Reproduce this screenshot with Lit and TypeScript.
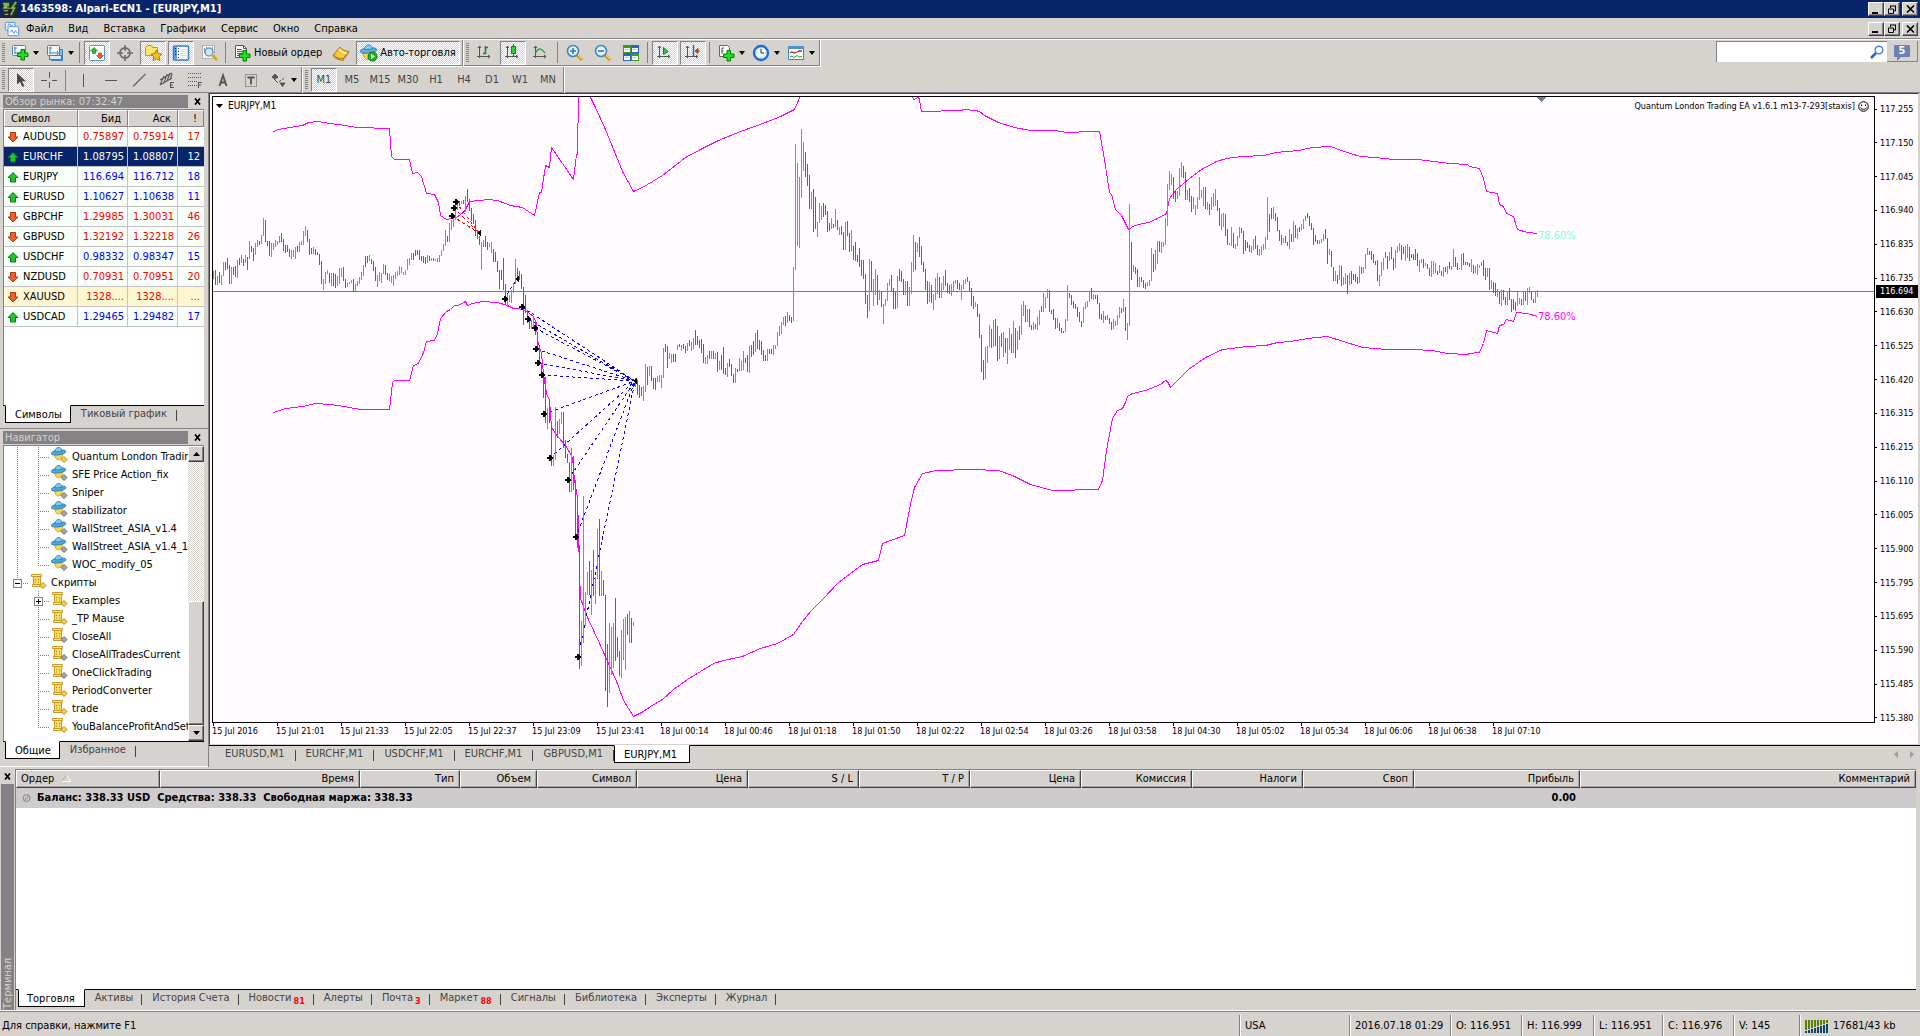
import { LitElement, html, svg, css, nothing } from "lit";
import { customElement, state } from "lit/decorators.js";
import { classMap } from "lit/directives/class-map.js";

/* ---------- shared look ---------- */

const base = css`
  :host {
    --face: #d6d3ce;
    --shade: #848284;
    --navy: #08246b;
    --paper: #fffbff;
    --dither: conic-gradient(#fff 25%, #d6d3ce 0 50%, #fff 0 75%, #d6d3ce 0) 0 0 / 2px 2px;
    font-family: "DejaVu Sans Condensed", "Noto Sans", sans-serif;
    font-size: 11px;
    line-height: 14px;
    color: #000;
    box-sizing: border-box;
  }
  *, *::before, *::after { box-sizing: border-box; }
  button {
    font: inherit;
    color: inherit;
    background: none;
    border: 0;
    padding: 0;
    margin: 0;
    border-radius: 0;
    white-space: nowrap;
  }
  svg { display: block; flex: none; }
  .caption {
    display: flex;
    gap: 4px;
    height: 14px;
    margin: 2px 4px 0 3px;
    align-items: flex-start;
  }
  .caption h2 {
    flex: 1;
    margin: 0;
    padding-left: 2px;
    background: var(--shade);
    color: var(--face);
    font-size: 11px;
    font-weight: normal;
    line-height: 13px;
    height: 13px;
  }
  .caption button { width: 12px; height: 13px; display: grid; place-items: center; }
  .tabs { display: flex; border-top: 1px solid #000; height: 18px; padding-left: 2px; color: #444; }
  .tabs button { padding: 0 10px; height: 16px; line-height: 16px; position: relative; }
  .tabs button::after { content: ""; position: absolute; right: 0; top: 4px; height: 11px; width: 1px; background: #444; }
  .tabs button.on {
    background: #fff;
    color: #000;
    height: 18px;
    margin-top: -1px;
    padding: 0 8px 0 9px;
    line-height: 18px;
    border: 1px solid #000;
    border-top-color: #fff;
    border-right-width: 1px;
  }
  .tabs button.on::after { content: none; }
`;

const closeGlyph = svg`<svg width="8" height="7" viewBox="0 0 8 7"><path d="M1 .5l5 6M6 .5L1 6.500" stroke="#000" stroke-width="1.800"/></svg>`;

/* ---------- icons ---------- */

const plus = (x: number, y: number) => svg`
  <path transform="translate(${x} ${y})" d="M4 .5h3.500v3.500h3.500v3.500h-3.500v3.500h-3.500v-3.500h-3.500v-3.500h3.500z" fill="#1fe01f" stroke="#067a06"/>`;
const axes = svg`<path d="M3.500 2v12M1 12.500h13M2 4l1.500-2L5 4M12 11l2 1.500-2 1.500" fill="none" stroke="#555"/>`;

const icons: Record<string, unknown> = {
  app: svg`<rect width="18" height="18" fill="#202830"/><path d="M1 3h6v2H3v2h3M16 1l-5 7h3l-4 8" fill="none" stroke="#7ab648" stroke-width="2"/><path d="M1 8h8M2 11h5M3 15h4" stroke="#cfd8a0"/>`,
  doc: svg`<rect x="1.500" y="1.500" width="11" height="9" rx="1" fill="#e8f3ff" stroke="#3c8ae6"/><rect x="4.500" y="6.500" width="12" height="10" rx="1" fill="#fff" stroke="#3c8ae6"/><path d="M4 6l2-3 2 3 2-2M7 13l2-3 2 4 2-3 2 3" fill="none" stroke="#3c8ae6"/>`,
  newChart: svg`<rect x="1.500" y="1.500" width="13" height="10" rx="1" fill="#f2f8fc" stroke="#4a87b5"/><path d="M4 3v7M3 9h10M3 4h3" stroke="#4a87b5"/>${plus(6, 5)}`,
  profiles: svg`<path d="M5.500 5.500h11v11h-11z" fill="#8bbbe0" stroke="#3f7fb3"/><rect x="1.500" y="1.500" width="12" height="10" rx="1" fill="#f2f8fc" stroke="#3f7fb3"/><rect x="3.500" y="11.500" width="12" height="4" fill="#dcebf7" stroke="#3f7fb3"/><path d="M4 3v7M3 9h9M3 4h3M11 7l1.500 2L11 11" fill="none" stroke="#3f7fb3"/>`,
  market: svg`<rect x="1.500" y="1.500" width="15" height="15" rx="1" fill="#fff" stroke="#5797d0"/><path d="M6 3.500l3.500 3.500H7.500v2.500h-3V7H2.500z" fill="#2eb82e" stroke="#12781a" stroke-width=".6"/><path d="M12 15l3.500-3.500H13.500V9h-3v2.500H8.500z" fill="#f05a28" stroke="#a8300c" stroke-width=".6"/>`,
  target: svg`<circle cx="9" cy="9" r="5" fill="none" stroke="#6b6b6b" stroke-width="1.800"/><path d="M9 1v6M9 11v6M1 9h6M11 9h6" stroke="#6b6b6b" stroke-width="1.500"/>`,
  favorites: svg`<path d="M1.500 3.500l2-2h4l1 2h5v8h-12z" fill="#ffe36b" stroke="#c9961c"/><path d="M12.500 6l1.700 3.600 3.800.5-2.800 2.700.7 3.900-3.400-1.900-3.400 1.900.7-3.900L7 10.100l3.800-.5z" fill="#f5c21c" stroke="#8f6410" stroke-width=".8"/>`,
  navigator: svg`<rect x="1.500" y="2" width="15" height="14" rx="1" fill="#fff" stroke="#2f7fd0" stroke-width="1.500"/><rect x="2" y="3" width="3" height="12" fill="#5a9be6"/><path d="M3.500 4v1M3.500 7v1M3.500 10v1M6.500 4v1M6.500 7v1M6.500 10v1M6.500 13v1" stroke="#123"/><path d="M8 5.500h7M8 7.500h7M8 9.500h7M8 11.500h7" stroke="#d9dfe8"/>`,
  tester: svg`<path d="M2.500 1.500h12v13h-12z" fill="#fafafa" stroke="#999" stroke-dasharray="2 1"/><path d="M4.500 9V4M6.500 6V3M12.500 6V3" stroke="#7f96ac"/><circle cx="9" cy="8" r="4" fill="#cfe6fa" stroke="#6d9cc9" stroke-width="1.500"/><path d="M12 11l5 5" stroke="#d8a520" stroke-width="2.500"/>`,
  order: svg`<path d="M1.500 1.500h8l3 3v9h-11z" fill="#fff" stroke="#555"/><path d="M9.500 1.500v3h3M3 5.500h5M3 7.500h7M3 9.500h7M3 11.500h3" fill="none" stroke="#555"/>${plus(5, 6)}`,
  book: svg`<path d="M1.500 11L8 3c2 3 5 4 9 4.500L11 15c-4 0-7-1-9.500-4z" fill="#f7c43c" stroke="#a87408"/><path d="M1.500 11v1.500c2 2.500 6 3.500 9.500 4V15c-4 0-7-1-9.500-4z" fill="#fff2bf" stroke="#a87408"/><path d="M11 16.500l6-7.500V7.500L11 15z" fill="#b87c0c"/><path d="M7 5c2 3 5 4 8 4.500" fill="none" stroke="#fff0a8" stroke-width="1.500"/>`,
  auto: svg`<path d="M2 8h13l-3 6c-2 2-5 2-7 0z" fill="#ffd84d" stroke="#c69518"/><ellipse cx="8.500" cy="6.500" rx="8" ry="2.600" fill="#5fb0e0" stroke="#2e7fb8" transform="rotate(-6 8.500 6.500)"/><path d="M4.500 5.500c0-6 8-6 8-.5z" fill="#8fd0f0" stroke="#2e7fb8"/><circle cx="12.500" cy="12.500" r="4.500" fill="#21b321" stroke="#0a780a"/><path d="M11 10l4 2.500-4 2.500z" fill="#fff"/>`,
  bars: svg`${axes}<path d="M9.500 2v8M9.500 3.500h2.500M7 9.500h2.500" stroke="#0b8a1e" stroke-width="1.500"/>`,
  candles: svg`${axes}<path d="M9.500 0v12" stroke="#0b8a1e"/><rect x="7.500" y="2.500" width="4" height="7" fill="#26d03e" stroke="#0b8a1e"/>`,
  line: svg`${axes}<path d="M3 10c3-6 5-7 10 -1" fill="none" stroke="#2e9c3c" stroke-width="1.300"/>`,
  zoomIn: svg`<path d="M10 10l6 6" stroke="#c99a1a" stroke-width="3"/><path d="M11 10l5 5" stroke="#ffe58a"/><circle cx="7" cy="7" r="5.500" fill="#e4f3fd" stroke="#3f87c4" stroke-width="1.600"/><path d="M4 7h6M7 4v6" stroke="#3477b5" stroke-width="1.600"/>`,
  zoomOut: svg`<path d="M10 10l6 6" stroke="#c99a1a" stroke-width="3"/><path d="M11 10l5 5" stroke="#ffe58a"/><circle cx="7" cy="7" r="5.500" fill="#e4f3fd" stroke="#3f87c4" stroke-width="1.600"/><path d="M4 7h6" stroke="#3477b5" stroke-width="1.600"/>`,
  tile: svg`<rect x="1" y="1" width="8" height="8" fill="#3f9b1c"/><rect x="9" y="1" width="8" height="8" fill="#2a62c9"/><rect x="1" y="9" width="8" height="8" fill="#2a62c9"/><rect x="9" y="9" width="8" height="8" fill="#3f9b1c"/><path d="M2 4h6v4H2zM10 4h6v4h-6zM2 12h6v4H2zM10 12h6v4h-6z" fill="#f4f8ff"/><path d="M3 5.500h3M11 5.500h3M3 13.500h3M11 13.500h3" stroke="#9fb8d0"/>`,
  scroll: svg`${axes}<path d="M7.500 3.500l4.500 4-4.500 3z" fill="#2fc44a" stroke="#0b8a1e"/>`,
  shift: svg`${axes}<path d="M9.500 1v11" stroke="#1a6fb0" stroke-width="1.500"/><path d="M16 7h-4M14 4.500L11 7l3 2.500z" stroke="#c23a10" fill="#c23a10"/>`,
  indicators: svg`<path d="M2.500 1.500h8l2 2v9h-10z" fill="#fff" stroke="#666"/><path d="M5 10V4h2M4.500 7h2" fill="none" stroke="#555"/>${plus(6, 6)}`,
  periods: svg`<circle cx="9" cy="9" r="7" fill="#eef6ff" stroke="#1f6fd0" stroke-width="2.400"/><path d="M9 5v4h3" fill="none" stroke="#333"/><path d="M9 3.500v1M9 13.500v1M3.500 9h1M13.500 9h1" stroke="#888"/>`,
  templates: svg`<rect x="1.500" y="2.500" width="15" height="13" fill="#fff" stroke="#3f83c6"/><path d="M1 2h16v3H1z" fill="#4a90d9"/><path d="M3 9l2-1 2 1 3-1 2-1h3" fill="none" stroke="#a33014" stroke-width="1.300"/><path d="M3 13l2-1 2 1.500 3-2 2 1.500 3-.5" fill="none" stroke="#2c9a3a"/>`,
  cursor: svg`<path d="M5 2v11.500l3-2.500 2.500 5 2-1-2.500-4.800h4z" fill="#4a4a4a"/>`,
  cross: svg`<path d="M9.500 1v6M9.500 11v6M1 9.500h6M12 9.500h5" stroke="#555"/>`,
  vline: svg`<path d="M9.500 3v13" stroke="#555"/>`,
  hline: svg`<path d="M3 9.500h12" stroke="#555"/>`,
  trend: svg`<path d="M3 15.500L15.500 3" stroke="#666" stroke-width="1.300"/>`,
  channel: svg`<path d="M2 9L14 2M2 14L14 7M2 14l4-9M6 12l3-9M9 10l3-8M12 9l2-6" stroke="#555" stroke-width="1.100"/><path d="M12 11.500h4M12 14h3M12 16.500h4M12.500 11v6" stroke="#555"/>`,
  fibo: svg`<path d="M2 2.500h14M2 6.500h14M2 10.500h9M2 14.500h9" stroke="#555" stroke-dasharray="1 1"/><path d="M12.500 11v6M12 11.500h4M12 14h3" stroke="#555"/>`,
  textA: svg`<path d="M5.500 15L9 4.500 12.500 15M7 11.500h4" fill="none" stroke="#555" stroke-width="1.900"/>`,
  label: svg`<rect x="3.500" y="3.500" width="11" height="12" fill="none" stroke="#555" stroke-dasharray="1 1"/><path d="M5.500 6.500h7M9 6.500v7" stroke="#555" stroke-width="1.800"/>`,
  arrows: svg`<path d="M6 3l3 3-3 2-3-2zM5 8l4 4M11 12h5l-2.500 3.500zM10 11l2-2M13 8.500l2-1" fill="#555" stroke="#555"/>`,
  expert: svg`<path d="M3 7h9l-1.500 4c-1.500 2.500-4.500 2.500-6 0z" fill="#f8d848" stroke="#c49a20" stroke-width=".8"/><ellipse cx="7.500" cy="5.500" rx="7.500" ry="2.400" fill="#4fa8e0" stroke="#2878b0" stroke-width=".8" transform="rotate(-8 7.500 5.500)"/><path d="M4 5c0-6 7-6 7-.5z" fill="#80c8f0" stroke="#2878b0" stroke-width=".8"/>`,
  script: svg`<path d="M3.500 3.500h7v8h-7z" fill="#fbdc66" stroke="#c99a28"/><path d="M1.500 1.500h10v2h-10zM2.500 11.500h9v2h-9z" fill="#ffe98a" stroke="#c99a28"/><path d="M5 6.500h1M8 6.500h1M5 9h1M8 9h1" stroke="#a87c18"/>`,
};

const icon = (name: string, size = 18) =>
  svg`<svg width=${size} height=${size} viewBox="0 0 18 18" aria-hidden="true">${icons[name]}</svg>`;

const drop = svg`<svg width="6" height="4" viewBox="0 0 6 4" aria-hidden="true"><path d="M0 0h6L3 4z" fill="#000"/></svg>`;

/* ---------- market watch ---------- */

const quotes: [string, string, string, string, "up" | "down"][] = [
  ["AUDUSD", "0.75897", "0.75914", "17", "down"],
  ["EURCHF", "1.08795", "1.08807", "12", "up"],
  ["EURJPY", "116.694", "116.712", "18", "up"],
  ["EURUSD", "1.10627", "1.10638", "11", "up"],
  ["GBPCHF", "1.29985", "1.30031", "46", "down"],
  ["GBPUSD", "1.32192", "1.32218", "26", "down"],
  ["USDCHF", "0.98332", "0.98347", "15", "up"],
  ["NZDUSD", "0.70931", "0.70951", "20", "down"],
  ["XAUUSD", "1328....", "1328....", "...", "down"],
  ["USDCAD", "1.29465", "1.29482", "17", "up"],
];

@customElement("market-watch")
class MarketWatch extends LitElement {
  @state() private selected = "EURCHF";

  static styles = [base, css`
    :host { display: flex; flex-direction: column; border-bottom: 1px solid var(--shade); padding-bottom: 5px; }
    .list { background: #fff; height: 296px; margin: 0 4px 0 3px; border-left: 1px solid var(--shade); border-top: 1px solid var(--shade); }
    table { border-collapse: separate; border-spacing: 0; width: 100%; table-layout: fixed; }
    th {
      height: 17px; padding: 0 6px; font-weight: normal; text-align: right; background: var(--face);
      border: 1px solid var(--shade); border-top-color: #fff; border-left-color: #fff;
    }
    th:first-child { text-align: left; width: 74px; }
    th:nth-child(2), th:nth-child(3) { width: 50px; }
    td {
      height: 20px; padding: 0 3px 0 0; text-align: right; background: #f8fff8; color: #f00; line-height: 18px;
      border-right: 1px solid #c6c3c6; border-bottom: 1px solid #c6c3c6;
    }
    td:last-child { padding-right: 4px; border-right: 0; }
    .sym { display: flex; align-items: center; gap: 4px; padding-left: 3px; color: #000; }
    .up td { color: #00f; }
    .up .sym { color: #000; }
    .gold td { background: #fff7d2; }
    .sel td, .sel .sym { background: var(--navy); color: #fff; }
    .tabs { margin: 0 4px 0 3px; }
  `];

  render() {
    return html`
      <header class="caption"><h2>Обзор рынка: 07:32:47</h2><button aria-label="Закрыть">${closeGlyph}</button></header>
      <div class="list">
        <table>
          <thead><tr><th>Символ</th><th>Бид</th><th>Аск</th><th>!</th></tr></thead>
          <tbody>
            ${quotes.map(([s, bid, ask, spread, dir]) => html`
              <tr class=${classMap({ up: dir === "up", gold: s === "XAUUSD", sel: s === this.selected })} @click=${() => (this.selected = s)}>
                <td><span class="sym">
                  <svg width="12" height="12" viewBox="0 0 12 12" aria-hidden="true">
                    ${dir === "up"
                      ? svg`<path d="M6 1l5 5H8.500v4.500h-5V6H1z" transform="translate(0 .5)" fill="#25c02f" stroke="#0f7a1c"/>`
                      : svg`<path d="M6 11l5-5H8.500V1.500h-5V6H1z" fill="#f0602c" stroke="#a8380f"/>`}
                  </svg>${s}</span></td>
                <td>${bid}</td><td>${ask}</td><td>${spread}</td>
              </tr>`)}
          </tbody>
        </table>
      </div>
      <nav class="tabs"><button class="on">Символы</button><button>Тиковый график</button></nav>
    `;
  }
}

/* ---------- navigator ---------- */

type Node = { text: string; kind: "expert" | "script"; on?: boolean; depth: 1 | 2; box?: "+" | "-"; last?: boolean };
const nodes: Node[] = [
  { text: "Quantum London Tradin", kind: "expert", on: true, depth: 2 },
  { text: "SFE Price Action_fix", kind: "expert", depth: 2 },
  { text: "Sniper", kind: "expert", depth: 2 },
  { text: "stabilizator", kind: "expert", depth: 2 },
  { text: "WallStreet_ASIA_v1.4", kind: "expert", depth: 2 },
  { text: "WallStreet_ASIA_v1.4_1", kind: "expert", depth: 2 },
  { text: "WOC_modify_05", kind: "expert", depth: 2, last: true },
  { text: "Скрипты", kind: "script", on: true, depth: 1, box: "-" },
  { text: "Examples", kind: "script", on: true, depth: 2, box: "+" },
  { text: "_TP Mause", kind: "script", on: true, depth: 2 },
  { text: "CloseAll", kind: "script", depth: 2 },
  { text: "CloseAllTradesCurrent", kind: "script", depth: 2 },
  { text: "OneClickTrading", kind: "script", depth: 2 },
  { text: "PeriodConverter", kind: "script", on: true, depth: 2 },
  { text: "trade", kind: "script", on: true, depth: 2 },
  { text: "YouBalanceProfitAndSet", kind: "script", on: true, depth: 2, last: true },
];

@customElement("navigator-panel")
class NavigatorPanel extends LitElement {
  static styles = [base, css`
    :host { display: flex; flex-direction: column; flex: 1; min-height: 0; padding-bottom: 7px; border-bottom: 1px solid #fff; }
    .body { flex: 1; min-height: 0; display: flex; background: #fff; margin: 0 4px 0 3px; border-left: 1px solid var(--shade); border-top: 1px solid var(--shade); }
    ul { flex: 1; min-width: 0; margin: 0; padding: 1px 0 0; list-style: none; overflow: hidden; }
    li { display: flex; align-items: center; height: 18px; white-space: nowrap; }
    li span { padding: 2px 0 0 4px; }
    .bar { width: 16px; display: flex; flex-direction: column; background: var(--dither); }
    .bar button, .thumb { background: var(--face); border: 1px solid #fff; border-right-color: #424142; border-bottom-color: #424142; box-shadow: inset -1px -1px var(--shade); }
    .bar button { height: 16px; display: grid; place-items: center; flex: none; }
    .track { flex: 1; display: flex; flex-direction: column; justify-content: flex-end; }
    .thumb { height: 47%; }
    .tabs { margin: 0 4px 0 3px; }
  `];

  private gutter(n: Node, i: number) {
    const w = n.depth === 1 ? 26 : 47;
    const x = n.depth === 1 ? 13 : 34;
    const end = n.depth === 1 || n.last ? 10 : 18;
    return svg`<svg width=${w} height="18" aria-hidden="true">
      <g stroke="#848284" stroke-dasharray="1 1" shape-rendering="crispEdges">
        ${i < 7 ? svg`<path d="M13.500 0v18"/>` : nothing}
        <path d="M${x}.5 0V${end}M${x} 10.500H${w - 1}"/>
      </g>
      ${n.box ? svg`<rect x=${x - 4 + 0.5} y="6.500" width="8" height="8" fill="#fff" stroke="#848284"/>
        <path d="M${x - 2} 10.500h5${n.box === "+" ? `M${x}.5 8v5` : ""}" stroke="#000"/>` : nothing}
    </svg>`;
  }

  render() {
    return html`
      <header class="caption"><h2>Навигатор</h2><button aria-label="Закрыть">${closeGlyph}</button></header>
      <div class="body">
        <ul>
          ${nodes.map((n, i) => html`<li>${this.gutter(n, i)}
            <svg width="17" height="18" viewBox="0 0 17 18" aria-hidden="true">
              ${icons[n.kind]}
              <path d="M13 9.500l3 3-3 3-3-3z" fill=${n.on ? "#f7cf4a" : "#a5a5a5"} stroke=${n.on ? "#b98a18" : "#6e6e6e"}/>
            </svg><span>${n.text}</span></li>`)}
        </ul>
        <div class="bar">
          <button aria-label="Вверх"><svg width="7" height="4"><path d="M0 4h7L3.500 0z"/></svg></button>
          <div class="track"><div class="thumb"></div></div>
          <button aria-label="Вниз"><svg width="7" height="4"><path d="M0 0h7L3.500 4z"/></svg></button>
        </div>
      </div>
      <nav class="tabs"><button class="on">Общие</button><button>Избранное</button></nav>
    `;
  }
}

/* ---------- chart ---------- */

/* Bars are two pixels apart. Each entry is direction + high,low in thirds of a pixel, measured from the run's top. */
const runs: { first: number; top: number; bars: string }[] = [
  { first: 0, top: -7, bars: `g543,566 b540,584 g558,584 b546,578 g555,584 g516,558 b516,540 b504,536 b525,581 g531,581 b531,556 b528,561 g510,564 b504,524 g495,518 b507,528 g495,518 b501,540 g453,507 b468,486 b474,513 g459,495 g450,470 b453,465 g435,462 g384,438 b390,456 b453,468 b453,498 g459,501 g459,480 g450,471 g453,465 g438,459 b429,456 b447,483 b465,489 b465,486 b477,501 g480,507 g480,500 g471,507 b468,486 g456,486 g453,465 g423,465 g408,438 b420,456 b447,495 b474,492 g471,492 b477,495 b486,495 b492,525 b513,582 g567,600 g546,582 g540,552 b550,580
    g550,588 b550,588 b551,595 g558,588 g534,582 g534,560 b530,572 b567,594 g579,591 g575,583 g570,578 b567,605 g582,603 g573,588 g561,582 g546,570 g525,558 b498,531 b498,519 g495,513 b507,522 b513,543 b531,573 g555,590 g546,573 g549,579 g522,552 b525,555 b549,570 g552,572 g558,578 g555,587 g546,567 g543,558 g528,555 g531,549 g546,555 g540,555 g507,540 g504,525 g489,511 b489,510 b480,498 b480,495 b480,510 b498,513 b498,519 b501,522 g495,519 b498,513 g504,513 b504,513 g507,514 g505,516 g495,516 g480,498 g462,483 g420,468 b438,456 g399,456 g390,420 g375,412 g340,390 g334,360 b333,348 g333,342 b330,342 g318,366 b297,336 b327,362 b354,393 b372,402 b390,438 b420,447 b438,465 g456,540 g450,470 b438,472 b456,480 g459,470 g456,490 b478,515 b486,517 b513,546 b540,597 b540,570 b504,600 b582,645 g612,651 g615,636 g600,640 g579,608 g507,582 b534,565 b543,570 b552,597 b591,705 b615,670 b660,700 b680,717 g690,717 g682,712 b697,735 b732,777 b777,822 b820,858 b855,924 b860,1000` },
  { first: 167, top: 193, bars: `g354,417 b330,398 b398,528 g495,528 g351,510 b393,444 g387,432 g366,402 b366,474 b450,503 b492,518 b516,606 g474,606 b498,600 b570,745 b650,773 b766,1137 g993,1128 g618,1059 g906,1007 g846,914 b813,914 g840,974 b780,918 g861,942 g717,868 b687,918 g843,918 b870,918 b915,1203 b1062,1250 g999,1208 g1011,1155 g999,1134 b924,1113 b1041,1102 b1083,1158 g1020,1163 g987,1110 g981,1140 b972,1035 g963,1059 b984,1059 g996,1008 g264,290 b270,315 b285,323 b290,318 g288,333 g222,306 b231,284 g228,258 b228,273 b264,297 b264,300 g258,276 g255,276 g255,294 g174,264 b162,186 b168,234 g189,206 g192,219 b192,216 b192,216 g165,180 b162,171 g165,183 b162,176 b168,188 g159,183 b150,168 g156,182 g144,177 b120,165 b138,165 b150,174 b147,189 b162,219 g201,222 g195,221 b183,207 g183,207 b183,207 g189,208 b186,245 g213,240 b195,240 b171,252 b234,255 g219,261 b207,231 b222,258 b252,279 g234,278 b237,246 g204,243 g213,243 g183,240 b204,219 b195,246 g168,248 b165,201 b153,195 g129,186 b120,177 b150,180 b153,195 b180,212 b195,212 g177,212 b177,192 b177,193 g165,195 g165,178 g126,168 g108,138 g96,132 g81,104 b78,108 g66,98 b75,93 b81,98 g-69,93` },
  { first: 291, top: -7, bars: `g162,540 g219,468 g261,474 g117,324 g156,243 b186,262 b222,288 b255,357 g306,357 b297,426 b321,417 g396,441 g339,399 g348,390 b339,381 b345,375 b363,426 b399,423 g384,417 b402,414 g357,411 b390,420 g411,435 b408,435 b426,480 g396,480 b393,438 b429,486 g420,483 b468,510 b456,513 b495,516 b474,531 b510,558 b510,567 b552,642 b615,684 g507,663 b513,606 g567,648 g537,615 b555,645 g600,630 b606,651 g642,702 g627,648 g579,633 g567,588 b555,603 b594,657 b606,657 g558,654 b537,573 b543,576 b567,615 g573,615 b573,648 g591,648 g516,612 g435,546 b456,540 g459,486 b441,501 b468,525 b516,546 b537,600 b573,642 g576,636 b585,639 g612,660 g564,630 g549,612 b561,624 g579,624 g558,600 b540,588 b579,609 b585,612 g582,618 g573,606 g570,582 b570,597 b579,600 g585,630 g570,597 g567,582 b561,576 b573,603 b594,648 b618,657 g636,651 b642,681 b672,744 b735,846 b810,870 g771,867 g768,819 g705,771 b717,774 g690,771 b687,768 b708,813 g738,807 b729,771 g726,801 b744,789 g744,822 g714,780 b732,789 g693,789 b714,804 g723,780 b708,750 g645,735 g633,678 b645,696 g657,696 b657,711 b705,720 g696,720 b702,717 g681,720 g660,705 b648,666 g609,666 g621,654 g597,624 b600,666 b660,672 b657,690 b684,717 g684,714 b699,723 b714,729 b723,729 g687,726 g585,693 b609,624 b615,645 b633,654 b642,657 b651,681 b666,696 b693,711 g651,699 g636,657 g633,651 g606,636 b594,627 g612,630 b615,627 b615,642 b639,687 b672,690 g663,699 b678,690 g675,690 b684,702 b696,720 g687,717 g693,708 g675,705 g651,684 b654,669 g627,666 b651,723 g699,750 g342,708` },
  { first: 459, top: 53, bars: `b276,390 g345,366 b351,372 b357,411 g381,411 b381,396 b390,414 b399,417 g396,408 g390,408 g294,393 b312,366 g300,360 g273,342 b273,306 g276,308 g276,291 g204,285 g102,228 g63,120 g72,105 b81,147 b120,156 g123,147 g54,138 g36,81 b48,84 b66,150 g120,150 b114,156 b138,186 g141,177 g165,195 g141,177 g81,150 g120,144 g111,168 b111,177 g156,180 b162,195 g141,180 g129,171 g117,168 b150,183 b174,228 g192,240 g189,231 b192,258 b237,285 g279,285 g231,288 b249,294 g282,297 g258,288 g231,264 b234,249 b243,312 b270,303 b276,294 b285,306 g288,309 g267,300 b258,297 b285,315 g297,318 g288,315 g282,300 g261,297 g141,270 b192,246 b174,207 g171,207 b189,213 b201,243 b240,273 b255,285 g264,279 b258,279 b276,288 g237,297 b252,276 g213,276 b225,264 g234,267 b231,246 g222,240 g207,237 g198,213 b189,204 b198,228 b219,240 b234,285 b255,276 b270,282 g270,282 g267,279 g252,273 b237,267 b264,342 g297,315 b303,351 b351,393 g363,393 b375,402 g345,390 b348,408 g381,405 g369,402 b375,432 g369,405 b363,402 b372,390 b372,396 b381,402 g348,399 b351,372 g351,369 g312,357 g294,315 b303,315 b303,330 b312,339 b333,345 b330,393 g375,408 g336,378 g324,360 b306,324 b318,357 g306,333 b291,327 b324,360 g300,354 g288,309 g279,303 b285,330 b291,312 g288,333 g282,324 b291,333 b312,324 b312,330 b297,330 b309,348 g330,366 g327,339 b327,354 g339,348 b342,357 b354,378 g333,381 g333,372 g339,369 b363,375 g345,369 b363,378 g351,381 b351,366 g348,372 b336,357 g348,360 g297,351 b321,351 b339,360 b354,357 g312,360 b309,345 b336,345 b336,345 b339,351 g327,366 b345,372 g348,369 g342,375 g345,354 g336,348 b330,378 b354,390 g354,381 b354,420 g390,417 b396,429 b399,438 g417,441 b426,462 g420,468 b420,450 b441,465 g426,465 b414,450 b447,486 b447,480 b456,483 g426,468 g444,462 b447,465 g426,465 b426,453 g414,465 g411,429 b423,450 b447,459 g426,459 g420,441` },
];

const barPath = (dir: "g" | "b") =>
  runs.map(({ first, top, bars }) =>
    bars.trim().split(/\s+/).map((b, i) => {
      if (b[0] !== dir) return "";
      const [hi, lo] = b.slice(1).split(",").map((v) => Math.round(Number(v) / 3 + top));
      return `M${(first + i) * 2}.5 ${hi}V${Math.max(lo, hi + 1)}`;
    }).join("")).join("");

/* Channel lines: origin in plot pixels, horizontal and vertical units per pixel, then points. */
type Piece = [ox: number, oy: number, sx: number, sy: number, pts: string];
const A = [-8, -7, 3, 3] as const;
const B = [287, 193, 3, 3] as const;
const C = [567, -7, 2.8, 3] as const;
const D = [907, 53, 3, 3] as const;
const P = [-213, -97, 1, 1] as const;

const channels: Piece[][] = [
  [[...A, "205,122 220,116 290,104 310,97 340,94 372,98 400,102 455,112 553,113 558,198 568,208 612,206 622,248 636,246 648,258 662,310 688,312 698,336 704,374 722,386 752,380 778,364 793,334 850,328 875,330 915,346 950,352 988,376 1003,306 1009,306 1020,224 1033,230 1039,170 1104,266 1112,192 1117,192 1120,10"]],
  [
    [...A, "1148,10 1170,52 1200,118 1250,244 1285,302 1310,290 1370,254 1440,200"],
    [...P, "700,149 718,140 740,131 757,125 770,120"],
    [...C, "0,78 38,58 60,10"],
  ],
  [
    [...C, "368,10 373,28 385,22 390,28 396,62 508,61 512,58 545,59 558,64 570,76 610,95 655,112 700,120 770,121 800,127 870,123 894,122 908,208 921,306 928,312 938,358 956,374 973,416 990,404 1030,396 1050,388 1082,368 1090,324 1110,298 1145,264 1180,238 1220,212 1250,203 1290,197 1355,195 1385,185 1450,180 1490,170 1540,169"],
    [...D, "664,0 690,10 720,17 765,20 820,27 890,26 940,32 990,40 1042,41 1048,48 1078,53 1090,84 1097,124 1130,130 1138,162 1150,168 1157,190 1180,198 1190,237 1220,246 1250,250"],
  ],
  [
    [...A, "205,965 240,955 290,948 330,940 372,941 400,946 465,958 500,956 553,958 560,876 568,870 612,870 624,824 640,820 655,786 664,752 688,750 697,728 704,684 722,662 735,658 748,644 760,644 781,634 787,646 800,640 830,634 875,636"],
    [...B, "20,45 40,55 55,55 75,60 100,78 107,100 112,150 124,190 130,250 137,310 148,330 153,410 175,440 195,465 215,500 223,570 230,620 235,720 236,850 240,925 260,980 300,1065 325,1120 350,1180 370,1230 400,1278 430,1262 450,1248 485,1227 520,1197 560,1168 600,1142 640,1120 670,1110 725,1099 780,1075 830,1060 880,1032"],
    [...P, "802,621 810,611 823,598 838,582 862,564 878,560 882,543 904,535 910,504 914,487 922,473 936,470 972,469 998,470 1012,475 1030,484 1052,490 1098,489 1102,480 1106,450 1112,418 1117,410"],
    [...D, "0,776 6,774 14,756 22,738 35,729 75,720 105,708 120,702 135,690 142,693 149,712 205,656 255,622 305,596 380,587 435,586 470,575 510,573 560,563 620,559 670,573 725,590 800,598 880,597 935,601 980,610 1040,613 1048,608 1078,606 1088,580 1097,541 1132,548 1138,524 1150,522 1157,506 1180,514 1188,486 1220,488 1250,497"],
  ],
];

const polyline = (pieces: Piece[]) =>
  pieces.flatMap(([ox, oy, sx, sy, pts]) =>
    pts.split(" ").map((p) => {
      const [x, y] = p.split(",").map(Number);
      return `${Math.round(ox + x / sx) + 0.5},${Math.round(oy + y / sy) + 0.5}`;
    })).join(" ");

/* Trades in plot pixels: entry point, exit point. */
const closeAt: [number, number] = [422, 284];
const buys: [number, number][] = [[309, 210], [315, 222], [322, 231], [323, 252], [325, 266], [329, 278], [331, 317], [337, 361], [355, 383], [363, 440], [365, 560]];
const sells: [number, number][] = [[243, 105], [241, 111], [239, 119]];
const sellExit: [number, number] = [266, 136];

const prices = ["117.255", "117.150", "117.045", "116.940", "116.835", "116.735", "116.630", "116.525", "116.420", "116.315", "116.215", "116.110", "116.005", "115.900", "115.795", "115.695", "115.590", "115.485", "115.380"];
const times = ["15 Jul 2016", "15 Jul 21:01", "15 Jul 21:33", "15 Jul 22:05", "15 Jul 22:37", "15 Jul 23:09", "15 Jul 23:41", "18 Jul 00:14", "18 Jul 00:46", "18 Jul 01:18", "18 Jul 01:50", "18 Jul 02:22", "18 Jul 02:54", "18 Jul 03:26", "18 Jul 03:58", "18 Jul 04:30", "18 Jul 05:02", "18 Jul 05:34", "18 Jul 06:06", "18 Jul 06:38", "18 Jul 07:10"];

@customElement("chart-view")
class ChartView extends LitElement {
  static styles = [base, css`
    :host { display: flex; flex-direction: column; flex: 1; min-width: 0; border-left: 1px solid var(--shade); }
    .frame {
      flex: 1; min-height: 0; display: grid; grid-template: 1fr 21px / 1fr 43px; background: var(--paper);
      border: 1px solid #424142; border-right: 1px solid var(--face); border-bottom: 1px solid var(--face); padding: 2px 0 0 2px; margin-right: 1px;
    }
    .plot { position: relative; overflow: hidden; border: 1px solid #000; font-size: 10px; line-height: 14px; }
    .plot > svg { position: absolute; inset: 0; width: 100%; height: 100%; }
    .legend { position: relative; display: flex; justify-content: space-between; align-items: center; padding: 2px 5px 0 3px; }
    .legend span { display: flex; align-items: center; gap: 5px; }
    .legend .advisor { gap: 3px; font-size: 9px; }
    .scale {
      grid-row: 1 / 3; grid-column: 2; position: relative; display: flex; flex-direction: column; justify-content: space-between;
      padding: 7px 0 20px; font-size: 9px; line-height: 12px;
    }
    .scale span { display: flex; align-items: center; gap: 3px; }
    .scale span::before { content: ""; width: 2px; height: 1px; background: #000; }
    .scale .now { position: absolute; top: 189px; left: 1px; right: 0; background: #000; color: #fff; font-weight: normal; line-height: 13px; padding-left: 4px; }
    .time { display: flex; font-size: 9px; line-height: 12px; overflow: hidden; }
    .time span { flex: none; width: 64px; white-space: nowrap; }
    .time span::before { content: ""; display: block; width: 1px; height: 3px; background: #000; margin: 0 0 -1px 1px; }
    .tabs { height: 21px; padding-left: 6px; margin-bottom: 1px; }
    .tabs button { padding: 0 11px 0 10px; }
    .tabs button.on { padding: 0 12px 0 9px; }
    .tabs .spacer { flex: 1; }
    .tabs .step { padding: 0 6px; }
    .tabs .step::after { content: none; }
  `];

  render() {
    const names = ["EURUSD,M1", "EURCHF,M1", "USDCHF,M1", "EURCHF,M1", "GBPUSD,M1", "EURJPY,M1"];
    const cross = ([x, y]: [number, number]) => svg`<path d="M${x - 3} ${y - 1}h2v-2h2v1h1v1h1v2h-1v1h-1v1h-2v-2h-2z"/>`;
    const exit = ([x, y]: [number, number]) => svg`<path d="M${x - 2} ${y}l2-3h1v6h-1z"/>`;
    return html`
      <div class="frame">
        <div class="plot">
          <svg shape-rendering="crispEdges" role="img" aria-label="EURJPY,M1">
            <line x1="0" x2="100%" y1="194.5" y2="194.5" stroke="#708090"/>
            <g fill="none" stroke="#f0f">${channels.map((c) => svg`<polyline points=${polyline(c)}/>`)}</g>
            <g stroke="#00f" stroke-dasharray="3 3">
              ${buys.map(([x, y]) => svg`<path d="M${x} ${y}L${closeAt.join(" ")}"/>`)}
              <path d="M291 202L304 182"/>
            </g>
            <g stroke="#f00" stroke-dasharray="3 3">${sells.map(([x, y]) => svg`<path d="M${x} ${y}L${sellExit.join(" ")}"/>`)}</g>
            <path d=${barPath("g")} stroke="#52b552"/>
            <path d=${barPath("b")} stroke="#0882bd"/>
            <g>${[...buys, ...sells, [292, 202] as [number, number]].map(cross)}${[sellExit, closeAt, [304, 182] as [number, number]].map(([x, y]) => exit([x + 1, y]))}</g>
            <path d="M1323 0h10l-5 5z" fill="#708090"/>
            <text x="1325" y="142" font-size="11" fill="#7fffd4">78.60%</text>
            <text x="1325" y="223" font-size="11" fill="#f0f">78.60%</text>
          </svg>
          <div class="legend">
            <span><svg width="7" height="4"><path d="M0 0h7L3.500 4z"/></svg>EURJPY,M1</span>
            <span class="advisor">Quantum London Trading EA v1.6.1 m13-7-293[staxis]
              <svg width="11" height="11" viewBox="0 0 11 11"><circle cx="5.500" cy="5.500" r="4.800" fill="none" stroke="#000"/><path d="M3.500 3.500v1.500M7.500 3.500v1.500M2.500 6.500c1 2.500 5 2.500 6 0" fill="none" stroke="#000"/></svg></span>
          </div>
        </div>
        <div class="scale">${prices.map((p) => html`<span>${p}</span>`)}<b class="now">116.694</b></div>
        <div class="time">${times.map((t) => html`<span>${t}</span>`)}</div>
      </div>
      <nav class="tabs">
        ${names.map((n, i) => html`<button class=${classMap({ on: i === 5 })}>${n}</button>`)}
        <div class="spacer"></div>
        <button class="step" aria-label="Назад"><svg width="4" height="7"><path d="M4 0v7L0 3.500z" fill="#9c9a9c"/></svg></button>
        <button class="step" aria-label="Вперёд"><svg width="4" height="7"><path d="M0 0v7L4 3.500z" fill="#9c9a9c"/></svg></button>
      </nav>
    `;
  }
}

/* ---------- terminal ---------- */

const columns: [string, number][] = [
  ["Ордер", 144], ["Время", 200], ["Тип", 100], ["Объем", 77], ["Символ", 100], ["Цена", 111], ["S / L", 111], ["T / P", 111],
  ["Цена", 111], ["Комиссия", 111], ["Налоги", 111], ["Своп", 111], ["Прибыль", 166], ["Комментарий", 0],
];
const terminalTabs: [string, string?][] = [
  ["Торговля"], ["Активы"], ["История Счета"], ["Новости", "81"], ["Алерты"], ["Почта", "3"], ["Маркет", "88"], ["Сигналы"], ["Библиотека"], ["Эксперты"], ["Журнал"],
];

@customElement("terminal-panel")
class TerminalPanel extends LitElement {
  static styles = [base, css`
    :host { display: flex; padding-top: 2px; border-bottom: 1px solid #fff; }
    .side { width: 15px; display: flex; flex-direction: column; align-items: center; }
    .side button { height: 15px; display: grid; place-items: center; }
    .side h2 {
      flex: 1; width: 13px; margin: 0; padding-top: 1px; background: var(--shade); color: var(--face);
      font-size: 11px; font-weight: normal; line-height: 13px; writing-mode: vertical-rl; transform: rotate(180deg);
    }
    .main { flex: 1; min-width: 0; margin-right: 4px; border-left: 1px solid var(--shade); border-top: 1px solid var(--shade); }
    .grid { background: #fff; height: 219px; }
    table { width: 100%; table-layout: fixed; border-collapse: separate; border-spacing: 0; }
    th {
      height: 18px; padding: 0 5px 0 4px; font-weight: normal; text-align: right; background: var(--face); white-space: nowrap;
      border: 1px solid #fff; border-right-color: #424142; border-bottom-color: #424142; box-shadow: inset -1px -1px #a5a2a5;
    }
    th:first-child { text-align: left; }
    th svg { display: inline-block; margin-left: 8px; }
    td { height: 20px; padding: 0 4px; background: #cecbce; font-weight: bold; text-align: right; white-space: nowrap; }
    td:first-child { text-align: left; }
    .sum { display: flex; align-items: center; gap: 5px; white-space: pre; }
    .tabs { height: 21px; }
    .tabs button { padding: 0 9px 0 10px; }
    .tabs button.on { padding: 0 9px 0 8px; }
    .tabs sub { color: #f00; font-size: 9px; font-weight: bold; line-height: 9px; vertical-align: -3px; margin-left: 2px; }
  `];

  render() {
    return html`
      <div class="side"><button aria-label="Закрыть">${closeGlyph}</button><h2>Терминал</h2></div>
      <div class="main">
        <div class="grid">
          <table>
            <colgroup>${columns.map(([, w]) => html`<col style=${w ? `width:${w}px` : ""}>`)}</colgroup>
            <thead><tr>${columns.map(([c], i) => html`<th>${c}${i === 0
              ? html`<svg width="9" height="8" viewBox="0 0 9 8" aria-hidden="true"><path d="M.5 7.500L4.500 .5l4 7z" fill="none" stroke="#fff"/><path d="M.5 7L4.500 .5" stroke="#a5a2a5"/></svg>`
              : nothing}</th>`)}</tr></thead>
            <tbody><tr>
              <td colspan="12"><span class="sum"><svg width="12" height="12" viewBox="0 0 12 12" aria-hidden="true"><circle cx="6.500" cy="6" r="3.500" fill="#c4c4c4" stroke="#8a8a8a"/><path d="M4 9l5-6" stroke="#8a8a8a"/></svg>Баланс: 338.33 USD  Средства: 338.33  Свободная маржа: 338.33</span></td>
              <td>0.00</td><td></td>
            </tr></tbody>
          </table>
        </div>
        <nav class="tabs">${terminalTabs.map(([t, n], i) => html`<button class=${classMap({ on: i === 0 })}>${t}${n ? html`<sub>${n}</sub>` : nothing}</button>`)}</nav>
      </div>
    `;
  }
}

/* ---------- application window ---------- */

type Tool = { i: string; t: string; on?: boolean; drop?: boolean; text?: string } | "sep" | "grip" | "end";
const mainTools: Tool[] = [
  "grip",
  { i: "newChart", t: "Новый график", drop: true }, { i: "profiles", t: "Профили", drop: true }, "sep",
  { i: "market", t: "Обзор рынка", on: true }, { i: "target", t: "Окно данных" }, { i: "favorites", t: "Навигатор", on: true },
  { i: "navigator", t: "Терминал", on: true }, { i: "tester", t: "Тестер стратегий" }, "sep",
  { i: "order", t: "Новый ордер", text: "Новый ордер" }, { i: "book", t: "MetaEditor" }, { i: "auto", t: "Авто-торговля", text: "Авто-торговля", on: true },
  "end", "grip",
  { i: "bars", t: "Бары" }, { i: "candles", t: "Свечи", on: true }, { i: "line", t: "Линия" }, "sep",
  { i: "zoomIn", t: "Увеличить" }, { i: "zoomOut", t: "Уменьшить" }, { i: "tile", t: "Окна плиткой" }, "sep",
  { i: "scroll", t: "Автопрокрутка", on: true }, { i: "shift", t: "Сдвиг графика", on: true }, "sep",
  { i: "indicators", t: "Индикаторы", drop: true }, { i: "periods", t: "Периоды", drop: true }, { i: "templates", t: "Шаблоны", drop: true }, "end",
];
const drawTools: Tool[] = [
  "grip",
  { i: "cursor", t: "Курсор", on: true }, { i: "cross", t: "Перекрестие" }, "sep",
  { i: "vline", t: "Вертикальная линия" }, { i: "hline", t: "Горизонтальная линия" }, { i: "trend", t: "Трендовая линия" },
  { i: "channel", t: "Канал" }, { i: "fibo", t: "Фибоначчи" }, { i: "textA", t: "Текст" }, { i: "label", t: "Метка" },
  { i: "arrows", t: "Стрелки", drop: true }, "end", "grip",
];
const frames = ["M1", "M5", "M15", "M30", "H1", "H4", "D1", "W1", "MN"];
const panes: [string, number][] = [
  ["USA", 110], ["2016.07.18 01:29", 101], ["O: 116.951", 71], ["H: 116.999", 72], ["L: 116.951", 69], ["C: 116.976", 71], ["V: 145", 66],
];

@customElement("app-root")
class AppRoot extends LitElement {
  @state() private frame = "M1";

  static styles = [base, css`
    :host { display: flex; flex-direction: column; min-height: 100vh; background: var(--face); }
    .title { display: flex; align-items: center; gap: 2px; height: 18px; padding: 0 2px; background: var(--navy); color: #fff; }
    .title h1 { flex: 1; margin: 0; font-size: 11px; line-height: 16px; }
    .win { display: flex; }
    .win button {
      width: 16px; height: 14px; background: var(--face); display: grid; place-items: center;
      border: 1px solid #fff; border-right-color: #424142; border-bottom-color: #424142; box-shadow: inset -1px -1px var(--shade);
    }
    .win button:last-child { margin-left: 2px; }
    .menu { display: flex; align-items: center; height: 21px; padding: 1px 2px 0 4px; border-bottom: 1px solid var(--shade); }
    .menu nav { flex: 1; display: flex; }
    .menu a { color: #000; text-decoration: none; padding: 0 8px 0 7px; }
    .menu a:first-child { padding-left: 6px; }
    .bars { display: flex; border-top: 1px solid #fff; border-bottom: 1px solid var(--shade); height: 54px; }
    .rows { flex: 1; display: flex; flex-direction: column; align-items: flex-start; }
    .bar { display: flex; align-items: center; height: 26px; }
    .bar.first { border-bottom: 1px solid var(--shade); box-shadow: 0 1px #fff; margin-bottom: 1px; }
    .grip { width: 3px; height: 20px; margin: 0 2px; background: repeating-linear-gradient(var(--shade) 0 1px, transparent 1px 2px); }
    .sep { width: 1px; height: 21px; background: var(--shade); margin: 0 3px 0 2px; }
    .end { width: 2px; height: 26px; border-left: 1px solid var(--shade); border-right: 1px solid #fff; margin-left: 1px; }
    .tool { height: 24px; min-width: 26px; margin: 0 1px; padding: 0 3px; display: flex; align-items: center; justify-content: center; gap: 2px; border: 1px solid transparent; }
    .tool.drop { gap: 4px; width: 33px; padding: 0 2px; justify-content: flex-start; }
    .tool.on { background: var(--dither); border-color: var(--shade) #fff #fff var(--shade); }
    .tf { color: #444; padding: 0; }
    .find { display: flex; align-items: flex-start; padding: 1px 2px; }
    .find label { display: flex; align-items: center; width: 171px; height: 21px; background: #fff; border: 1px solid var(--shade); border-right: 0; border-bottom: 0; padding-right: 3px; }
    .find input { flex: 1; min-width: 0; border: 0; outline: 0; background: none; font: inherit; padding: 0 4px; }
    .find button { width: 31px; height: 21px; display: grid; place-items: center; border-right: 1px solid var(--shade); border-bottom: 1px solid var(--shade); }
    .badge { position: relative; width: 16px; height: 12px; background: #6b82b5; color: #fff; font-weight: bold; line-height: 12px; border-radius: 1px; }
    .badge::after { content: ""; position: absolute; left: 3px; top: 12px; border: 2px solid transparent; border-top-color: #6b82b5; border-left-color: #6b82b5; }
    .work { flex: 1; display: flex; }
    .left { width: 208px; display: flex; flex-direction: column; }
    .status { display: flex; align-items: stretch; height: 25px; padding: 3px 0 0; border-top: 1px solid var(--shade); line-height: 21px; }
    .status span { flex: none; border-left: 1px solid var(--shade); box-shadow: inset 1px 0 #fff; padding-left: 5px; white-space: nowrap; }
    .status .hint { flex: 1; border: 0; box-shadow: none; padding-left: 2px; }
    .status .net { width: 121px; display: flex; align-items: center; gap: 4px; }
  `];

  private winButtons() {
    return html`<div class="win">
      <button aria-label="Свернуть"><svg width="10" height="9"><path d="M1 8h6" stroke="#000" stroke-width="2"/></svg></button>
      <button aria-label="Восстановить"><svg width="10" height="9"><path d="M3 1h6M3.500 1v2M8.500 1v5H7M1 4h5.500M1.500 4v4.500h5V4" fill="none" stroke="#000"/></svg></button>
      <button aria-label="Закрыть"><svg width="9" height="8"><path d="M1 .5l7 7M8 .5l-7 7" stroke="#000" stroke-width="1.600"/></svg></button>
    </div>`;
  }

  private tool(t: Tool) {
    if (typeof t === "string") return html`<i class=${t}></i>`;
    return html`<button class=${classMap({ tool: true, on: !!t.on, drop: !!t.drop })} title=${t.t} aria-label=${t.t}>
      ${icon(t.i)}${t.text ?? nothing}${t.drop ? drop : nothing}</button>`;
  }

  render() {
    return html`
      <header class="title">${icon("app", 16)}<h1>1463598: Alpari-ECN1 - [EURJPY,M1]</h1>${this.winButtons()}</header>
      <div class="menu">
        ${icon("doc", 16)}
        <nav>${["Файл", "Вид", "Вставка", "Графики", "Сервис", "Окно", "Справка"].map((m) => html`<a href="#">${m}</a>`)}</nav>
        ${this.winButtons()}
      </div>
      <div class="bars">
        <div class="rows">
          <div class="bar first">${mainTools.map((t) => this.tool(t))}</div>
          <div class="bar">
            ${drawTools.map((t) => this.tool(t))}
            ${frames.map((f) => html`<button class=${classMap({ tool: true, tf: true, on: f === this.frame })} @click=${() => (this.frame = f)}>${f}</button>`)}
            <i class="end"></i>
          </div>
        </div>
        <div class="find">
          <label><input type="search" aria-label="Поиск"><svg width="14" height="14" viewBox="0 0 14 14" aria-hidden="true"><path d="M1 13l5-5" stroke="#2a62c9" stroke-width="2.500"/><circle cx="9" cy="5" r="3.800" fill="#fff" stroke="#4a86e0" stroke-width="1.500"/></svg></label>
          <button aria-label="Сообщения"><span class="badge">5</span></button>
        </div>
      </div>
      <main class="work">
        <aside class="left"><market-watch></market-watch><navigator-panel></navigator-panel></aside>
        <chart-view></chart-view>
      </main>
      <terminal-panel></terminal-panel>
      <footer class="status">
        <span class="hint">Для справки, нажмите F1</span>
        ${panes.map(([p, w]) => html`<span style=${`width:${w}px`}>${p}</span>`)}
        <span class="net"><svg width="24" height="14" viewBox="0 0 24 14" aria-hidden="true">
          ${Array.from({ length: 8 }, (_, i) => svg`<path d="M${i * 3 + 1} 1V${11 - i}" stroke="#5a8200" stroke-width="2"/><path d="M${i * 3 + 1} ${12 - i}V14" stroke="#10456b" stroke-width="2"/>`)}
        </svg>17681/43 kb</span>
      </footer>
    `;
  }
}
